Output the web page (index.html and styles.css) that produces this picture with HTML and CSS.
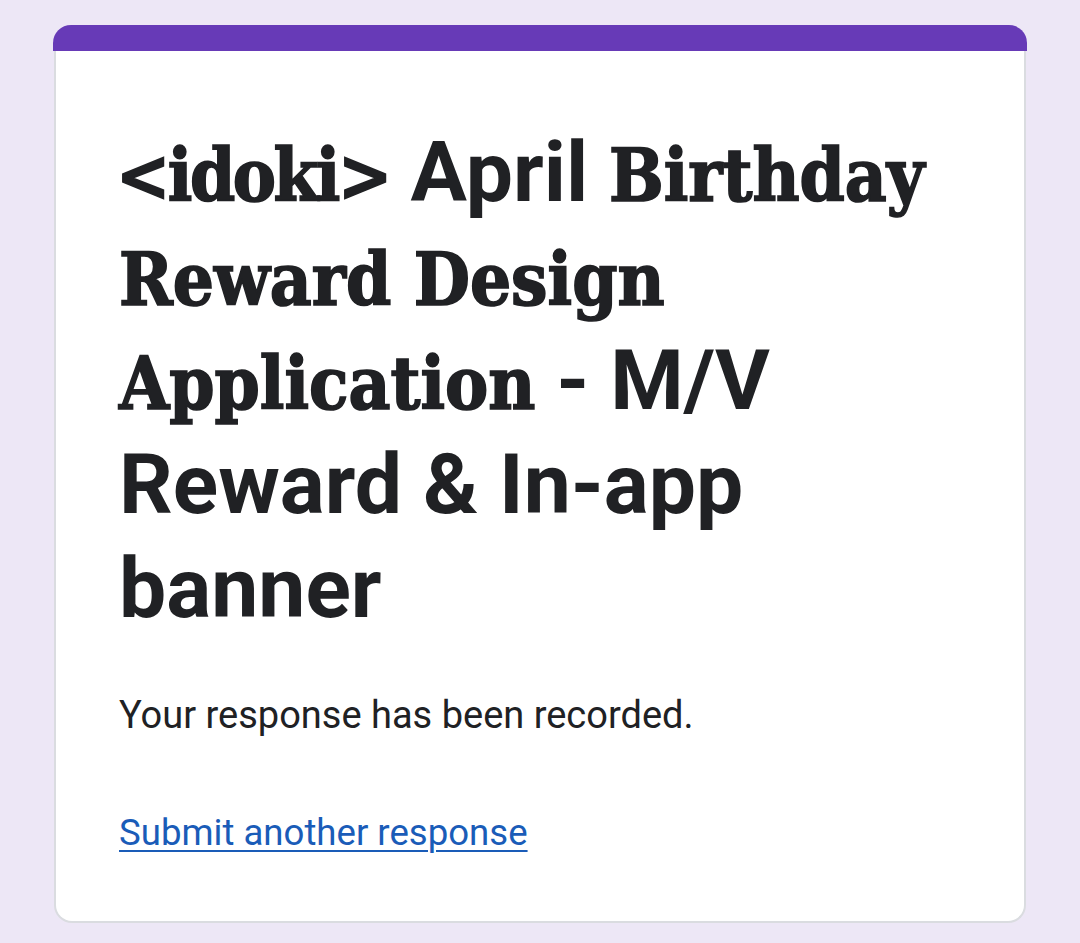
FILE: index.html
```html
<!DOCTYPE html>
<html lang="en">
<head>
<meta charset="utf-8">
<title>Response recorded</title>
<link rel="stylesheet" href="styles.css">
</head>
<body>
<main class="card">
  <div class="card-top"></div>
  <div class="card-body">
    <h1 class="title"><span class="serif tag">&lt;idoki&gt;</span> April <span class="serif">Birthday Reward Design Application</span> - M/V Reward &amp; In-app banner</h1>
    <p class="message">Your response has been recorded.</p>
    <a class="link" href="#">Submit another response</a>
  </div>
</main>
</body>
</html>
```
FILE: styles.css
```css
html, body {
  margin: 0;
  padding: 0;
}
body {
  background: #ede7f6;
  font-family: Roboto, "Noto Sans", sans-serif;
  color: #202124;
  padding: 25px 53px 20px 53px;
  height: 943px;
  box-sizing: border-box;
}
.card {
  display: flex;
  flex-direction: column;
  height: 898px;
}
.card-top {
  height: 26px;
  background: #673ab7;
  border-radius: 18px 18px 0 0;
  flex: none;
}
.card-body {
  flex: 1;
  margin: 0 1px;
  background: #ffffff;
  border: 2px solid #dadce0;
  border-top: none;
  border-radius: 0 0 18px 18px;
  padding: 70px 58px 0 63px;
}
.title {
  margin: 0;
  font-size: 84px;
  line-height: 104px;
  font-weight: 700;
  color: #202124;
}
.serif {
  font-family: "DejaVu Serif Condensed", "DejaVu Serif", "Liberation Serif", serif;
  font-stretch: condensed;
  font-size: 72px;
  line-height: 1;
  -webkit-text-stroke: 1.6px #202124;
}
.tag {
  letter-spacing: -2.5px;
  margin-left: -3px;
}
.message {
  margin: 52px 0 0 0;
  font-size: 38px;
  line-height: 44px;
  color: #202124;
}
.link {
  display: inline-block;
  margin-top: 74px;
  font-size: 36.6px;
  line-height: 44px;
  color: #1a5cb8;
  text-decoration: underline;
  text-decoration-thickness: 2px;
  text-underline-offset: 5px;
}
```
